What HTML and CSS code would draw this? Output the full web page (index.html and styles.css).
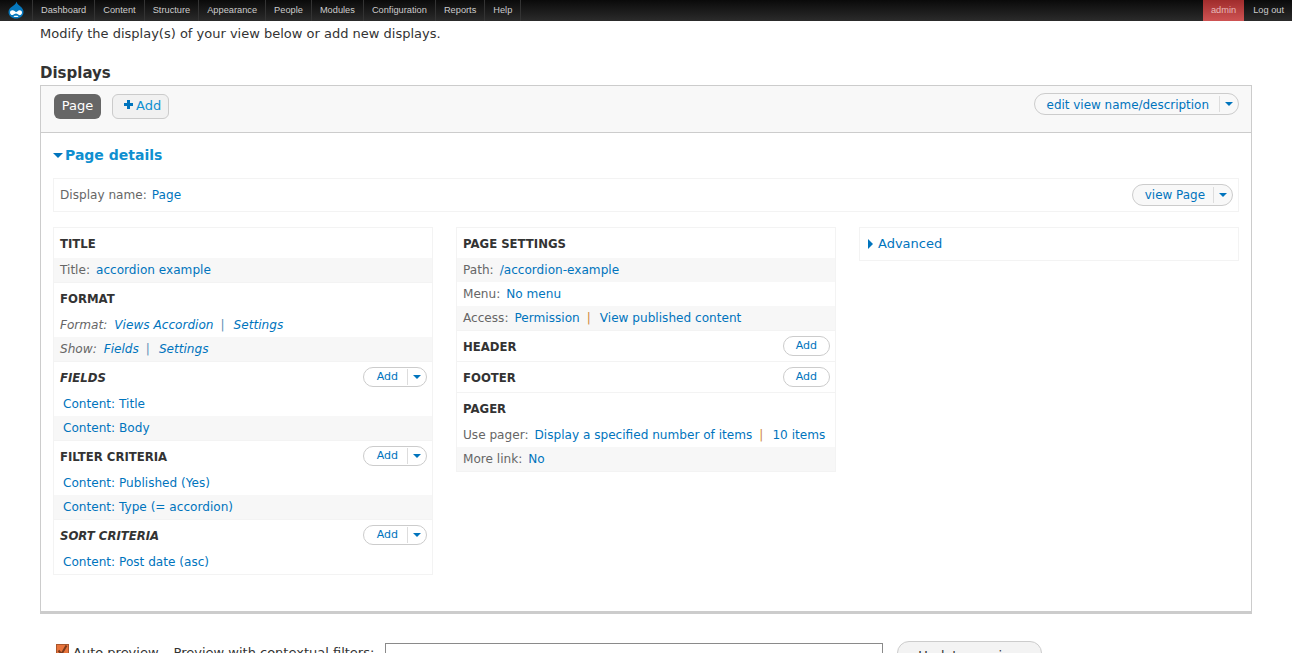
FILE: index.html
```html
<!DOCTYPE html>
<html>
<head>
    <title>Views - Displays</title>
    <link rel="stylesheet" href="styles.css">
</head>
<body>
    <div class="toolbar">
        <a class="home" href="#">
            <svg width="16" height="18" viewBox="0 0 16 18">
                <path d="M8.5 0.5C9 3 11 4 12.5 5.5C14.5 7.2 15.5 9 15.5 11C15.5 15 12 17.5 8 17.5C4 17.5 0.5 15 0.5 11C0.5 8.5 2.3 6.7 4.2 5.5C6 4.3 8 3 8.5 0.5Z" fill="#0678be"/>
                <path d="M2 11.5C2 9.5 4 9 5.5 9.5C6.5 9.9 7.4 10.8 8 11C8.8 11.2 10 9.5 11.5 9.3C13 9.2 14.2 10.2 14 11.8C13.8 13.5 12.2 14.6 11 14C10 13.4 9 12.6 8 12.6C7 12.6 6 13.6 4.8 14C3.4 14.3 2 13.3 2 11.5Z" fill="#fff"/>
                <path d="M5.5 15.2C6.8 14.6 9.2 14.6 10.5 15.2C9.5 16.4 6.5 16.4 5.5 15.2Z" fill="#fff"/>
            </svg>
        </a>
        <ul class="menu">
            <li><a href="#">Dashboard</a></li>
            <li><a href="#">Content</a></li>
            <li><a href="#">Structure</a></li>
            <li><a href="#">Appearance</a></li>
            <li><a href="#">People</a></li>
            <li><a href="#">Modules</a></li>
            <li><a href="#">Configuration</a></li>
            <li><a href="#">Reports</a></li>
            <li><a href="#">Help</a></li>
        </ul>
        <ul class="menu user-menu">
            <li class="active"><a href="#">admin</a></li>
            <li><a href="#">Log out</a></li>
        </ul>
    </div>

    <div class="page">
        <p class="intro">Modify the display(s) of your view below or add new displays.</p>
        <h2 class="displays-title">Displays</h2>

        <div class="displays">
            <div class="tabs">
                <a class="tab tab-active" href="#">Page</a>
                <a class="tab tab-add" href="#"><svg class="plus" width="9" height="9" viewBox="0 0 9 9"><path d="M3 0H6V3H9V6H6V9H3V6H0V3H3Z" fill="#0074bd"/></svg>Add</a>
                <div class="dropbutton big push-right">
                    <a href="#">edit view name/description</a>
                    <span class="drop"><i class="caret"></i></span>
                </div>
            </div>

            <div class="details">
                <h3 class="details-title"><i class="caret big-caret"></i>Page details</h3>

                <div class="name-bar">
                    <span class="label">Display name:</span><a href="#">Page</a>
                    <div class="dropbutton big push-right view-page">
                        <a href="#">view Page</a>
                        <span class="drop"><i class="caret"></i></span>
                    </div>
                </div>

                <div class="columns">
                    <div class="column">
                        <div class="section">
                            <div class="head"><h4>Title</h4></div>
                            <div class="row odd"><span class="label">Title:</span><a href="#">accordion example</a></div>
                        </div>
                        <div class="section">
                            <div class="head"><h4>Format</h4></div>
                            <div class="row em"><span class="label">Format:</span><a href="#">Views Accordion</a><span class="sep">|</span><a href="#">Settings</a></div>
                            <div class="row odd em"><span class="label">Show:</span><a href="#">Fields</a><span class="sep">|</span><a href="#">Settings</a></div>
                        </div>
                        <div class="section">
                            <div class="head em">
                                <h4>Fields</h4>
                                <div class="dropbutton"><a href="#">Add</a><span class="drop"><i class="caret"></i></span></div>
                            </div>
                            <div class="row indent"><a href="#">Content: Title</a></div>
                            <div class="row indent odd"><a href="#">Content: Body</a></div>
                        </div>
                        <div class="section">
                            <div class="head">
                                <h4>Filter criteria</h4>
                                <div class="dropbutton"><a href="#">Add</a><span class="drop"><i class="caret"></i></span></div>
                            </div>
                            <div class="row indent"><a href="#">Content: Published (Yes)</a></div>
                            <div class="row indent odd"><a href="#">Content: Type (= accordion)</a></div>
                        </div>
                        <div class="section">
                            <div class="head em">
                                <h4>Sort criteria</h4>
                                <div class="dropbutton"><a href="#">Add</a><span class="drop"><i class="caret"></i></span></div>
                            </div>
                            <div class="row indent"><a href="#">Content: Post date (asc)</a></div>
                        </div>
                    </div>

                    <div class="column">
                        <div class="section">
                            <div class="head"><h4>Page settings</h4></div>
                            <div class="row odd"><span class="label">Path:</span><a href="#">/accordion-example</a></div>
                            <div class="row"><span class="label">Menu:</span><a href="#">No menu</a></div>
                            <div class="row odd"><span class="label">Access:</span><a href="#">Permission</a><span class="sep orange">|</span><a href="#">View published content</a></div>
                        </div>
                        <div class="section">
                            <div class="head">
                                <h4>Header</h4>
                                <div class="dropbutton single"><a href="#">Add</a></div>
                            </div>
                        </div>
                        <div class="section">
                            <div class="head">
                                <h4>Footer</h4>
                                <div class="dropbutton single"><a href="#">Add</a></div>
                            </div>
                        </div>
                        <div class="section">
                            <div class="head"><h4>Pager</h4></div>
                            <div class="row"><span class="label">Use pager:</span><a href="#">Display a specified number of items</a><span class="sep orange">|</span><a href="#">10 items</a></div>
                            <div class="row odd"><span class="label">More link:</span><a href="#">No</a></div>
                        </div>
                    </div>

                    <div class="column">
                        <div class="advanced"><i class="caret-right"></i><a href="#">Advanced</a></div>
                    </div>
                </div>
            </div>
        </div>

        <div class="preview">
            <label class="auto"><span class="checkbox"><svg width="11" height="11" viewBox="0 0 11 11"><path d="M1.5 5.5L4.5 9L9.5 0.5" fill="none" stroke="#7a3a1c" stroke-width="2"/></svg></span>Auto preview</label>
            <label class="filters">Preview with contextual filters:</label>
            <input class="filter-input" type="text">
            <button class="update">Update preview</button>
        </div>
    </div>
</body>
</html>
```
FILE: styles.css
```css
html, body {
    height: 653px;
    overflow: hidden;
}
body {
    margin: 0;
    background: #fff;
    color: #333;
    font-family: "DejaVu Sans", sans-serif;
    font-size: 12.1px;
    line-height: 18px;
}
a {
    color: #0074bd;
    text-decoration: none;
}

/* toolbar */
.toolbar {
    display: flex;
    height: 21px;
    background: linear-gradient(#0a0a0a, #2b2b2b);
    font-family: "Liberation Sans", Arial, sans-serif;
    font-size: 9.25px;
    line-height: 21px;
}
.home {
    display: flex;
    justify-content: center;
    width: 33px;
    border-right: 1px solid #333;
    box-sizing: border-box;
}
.home svg {
    margin-top: 1px;
}
.menu {
    display: flex;
    list-style: none;
    margin: 0;
    padding: 0;
}
.menu li {
    border-right: 1px solid #333;
}
.menu a {
    display: block;
    padding: 0 8px;
    color: #ccc;
}
.user-menu {
    margin-left: auto;
}
.user-menu li {
    border-right: 0;
}
.user-menu li.active {
    background: linear-gradient(#a02c2c, #ce5353);
}
.user-menu li.active a {
    color: #e8b8b8;
    padding: 0 8px;
}
.user-menu a {
    padding: 0 8px 0 9px;
}

/* page */
.page {
    padding: 0 40px;
}
.intro {
    margin: 3px 0 0;
    font-size: 13px;
    line-height: 20px;
}
.displays-title {
    margin: 19px 0 0;
    font-size: 15px;
    line-height: 20px;
    font-weight: bold;
}
.displays {
    margin-top: 2px;
    border: 1px solid #ccc;
    border-bottom: 3px solid #ccc;
    height: 529px;
    box-sizing: border-box;
}
.tabs {
    display: flex;
    align-items: flex-start;
    height: 47px;
    box-sizing: border-box;
    padding: 8px 12px 0 13px;
    background: #f8f8f8;
    border-bottom: 1px solid #ccc;
}
.tab {
    display: block;
    height: 25px;
    line-height: 23px;
    border-radius: 6px;
    box-sizing: border-box;
    font-size: 13px;
}
.tab-active {
    width: 47px;
    text-align: center;
    background: #666;
    color: #fff;
}
.tab-add {
    width: 57px;
    margin-left: 11px;
    padding-left: 11px;
    line-height: 21px;
    border: 1px solid #cbcbcb;
    background: #f1f1f1;
    color: #0f8fd0;
}
.plus {
    margin-right: 3px;
    vertical-align: 1px;
}
.push-right {
    margin-left: auto;
}
.dropbutton {
    display: flex;
    align-items: center;
    height: 20px;
    box-sizing: border-box;
    border: 1px solid #ccc;
    border-radius: 10px;
    background: #fff;
    font-size: 11px;
}
.dropbutton a {
    padding: 0 9px 0 13px;
    line-height: 16px;
}
.dropbutton .drop {
    display: flex;
    align-items: center;
    justify-content: center;
    width: 18px;
    height: 16px;
    border-left: 1px solid #ddd;
}
.dropbutton.single a {
    padding: 0 12px;
}
.dropbutton.big {
    height: 22px;
    border-radius: 11px;
    background: #f8f8f8;
    font-size: 11.96px;
}
.tabs .dropbutton.big {
    margin-top: -1px;
}
.tabs .dropbutton.big a {
    margin-top: 1px;
}
.dropbutton.big a {
    padding: 0 10px 0 12px;
}
.dropbutton.view-page a {
    padding-right: 8px;
}
.caret {
    display: block;
    width: 0;
    height: 0;
    border-left: 4px solid transparent;
    border-right: 4px solid transparent;
    border-top: 4px solid #0074bd;
}
.big-caret {
    display: inline-block;
    border-left-width: 5px;
    border-right-width: 5px;
    border-top-width: 5px;
    margin-right: 2px;
    vertical-align: 2px;
}
.caret-right {
    display: inline-block;
    width: 0;
    height: 0;
    border-top: 5px solid transparent;
    border-bottom: 5px solid transparent;
    border-left: 5px solid #0074bd;
    margin-right: 5px;
    vertical-align: -1px;
}

/* page details */
.details {
    padding: 12px 12px 0;
}
.details-title {
    margin: 0;
    font-size: 14px;
    line-height: 20px;
    font-weight: bold;
    color: #0f8fd0;
}
.name-bar {
    display: flex;
    align-items: center;
    height: 34px;
    margin-top: 13px;
    padding: 0 5px 0 6px;
    box-sizing: border-box;
    border: 1px solid #f3f3f3;
}
.label {
    color: #666;
    margin-right: 6px;
}
.name-bar .label {
    margin-right: 5px;
}
.row.em .label {
    margin-right: 7px;
}
.columns {
    display: grid;
    grid-template-columns: 380px 380px 380px;
    gap: 23px;
    margin-top: 15px;
    align-items: start;
}
.column {
    border: 1px solid #f3f3f3;
    box-sizing: border-box;
}
.section {
    border-bottom: 1px solid #f3f3f3;
}
.section:last-child {
    border-bottom: 0;
}
.head {
    display: flex;
    align-items: center;
    justify-content: space-between;
    height: 30px;
    padding: 0 5px 0 6px;
}
.head h4 {
    margin: 2px 0 0;
    font-size: 11.7px;
    font-weight: bold;
    text-transform: uppercase;
    color: #333;
}
.head.em h4 {
    font-style: italic;
}
.row {
    height: 24px;
    line-height: 24px;
    padding: 0 6px;
    white-space: nowrap;
}
.row.odd {
    background: #f7f7f7;
}
.row.em {
    font-style: italic;
}
.row.indent {
    padding-left: 9px;
}
.sep {
    color: #5f92b8;
    margin: 0 9px 0 7px;
}
.sep.orange {
    color: #d08a40;
}
.advanced {
    height: 32px;
    line-height: 32px;
    padding-left: 8px;
    font-size: 13px;
}

/* preview */
.preview {
    display: flex;
    align-items: flex-start;
    margin-top: 29px;
    font-size: 13px;
}
.auto, .filters {
    display: block;
    line-height: 20px;
}
.auto {
    margin-left: 16px;
}
.checkbox {
    display: inline-block;
    width: 13px;
    height: 13px;
    box-sizing: border-box;
    margin-right: 4px;
    background: #e8743c;
    border: 1px solid #a9562c;
    vertical-align: 0;
}
.checkbox svg {
    display: block;
}
.filters {
    margin-left: 15px;
}
.filter-input {
    width: 498px;
    height: 24px;
    margin: 0 0 0 11px;
    box-sizing: border-box;
    border: 1px solid #8a8a8a;
}
.update {
    height: 30px;
    margin: -2px 0 0 14px;
    padding: 0 20px 2px;
    border: 1px solid #ccc;
    border-radius: 12px;
    background: #f3f3f3;
    font-family: inherit;
    font-size: 13px;
    color: #333;
}
```
